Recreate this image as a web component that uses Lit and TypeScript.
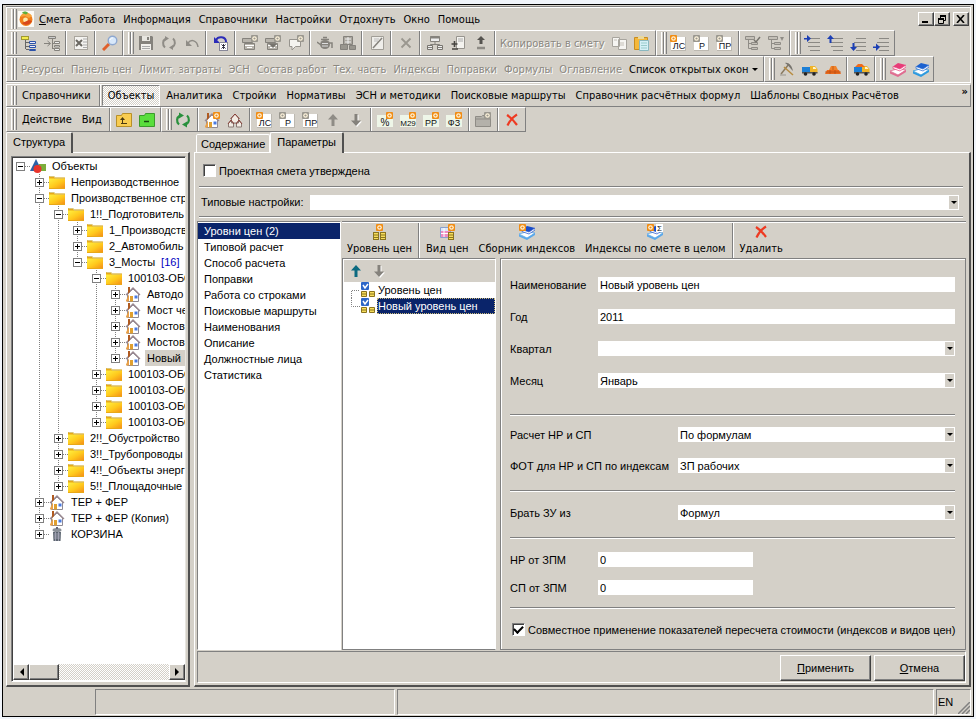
import { LitElement, html, svg, css, nothing } from "lit";
import { customElement, property, state } from "lit/decorators.js";
import { classMap } from "lit/directives/class-map.js";

/* ---------- icon parts ---------- */
const OR = "#f08c14";
const GR = "#85827c";
const LG = "#9a978f";
const gear = (x: number, y: number, c: string) => svg`
  <rect x=${x} y=${y} width="7" height="7" rx="1" fill=${c}/>
  <circle cx=${x + 3.5} cy=${y + 3.5} r="2.3" fill="#fff4dc"/>
  <circle cx=${x + 3.5} cy=${y + 3.5} r="1.1" fill=${c}/>`;

const sheet = (label: string, c: string) => svg`
  <rect x="1" y="2" width="15" height="14" fill="#fff"/>
  <path d="M1 15.500h15M15.500 2v14" stroke="#bcb8b0"/>
  <text x="9" y="14" text-anchor="middle" font-size="9" font-family="Liberation Sans, sans-serif" fill="#112">${label}</text>
  ${gear(0, 0, c)}`;
const calcSheet = (label: string, size = 9) => svg`
  <rect x="0" y="3" width="16" height="12" fill="#eef6e8"/>
  <text x="8" y="14" text-anchor="middle" font-size=${size} font-family="Liberation Sans, sans-serif" fill="#111">${label}</text>
  ${gear(9, 0, OR)}`;
const hier = (a: string, b: string) => svg`
  <rect x="0.5" y="1.500" width="7" height="3" fill=${a} stroke="#a09a30"/>
  <path d="M4.500 5v9M5 7.500h3M5 11.500h3M5 14.500h3" stroke="#666" fill="none"/>
  <path d="M8.500 6.500h6v2h-6zM8.500 10.500h6v2h-6zM8.500 14.500h6v1h-6z" fill="#eef" stroke=${b}/>`;
const books = (a: string, b: string) => svg`
  <path d="M0 10l7-2 9 1-8 5z" fill="#fff" stroke=${b} stroke-width=".8"/>
  <path d="M0 10.500l8 3.500 8-5v2l-8 5-8-3.500z" fill=${b}/>
  <path d="M3 5.500l5-3.500 8 2-6 4z" fill=${a}/>
  <path d="M3 5.500l7 2.500 6-4v2l-6 4-7-2.500z" fill="#fff" stroke=${a} stroke-width=".7"/>`;
const lines = (arrow: unknown) => svg`
  <path d="M6 3.500h10M4 7.500h12M4 11.500h12M6 15.500h10" stroke="#8b8984" fill="none"/>${arrow}`;
const arr = (d: string) => svg`<path d=${d} fill="#1c3fb4"/>`;
const truck = svg`<path d="M0 6h8v5H0z" fill="#1c7fd6"/><path d="M8 5h5l2.500 3v4H8z" fill="#f0b428"/><path d="M11 6h2l1.500 2H11z" fill="#fff3cc"/><path d="M0 11h15.500v1.500H0z" fill="#555"/><circle cx="3.500" cy="13" r="1.800" fill="#222"/><circle cx="12" cy="13" r="1.800" fill="#222"/>`;
const coins = (x: number, y: number) => svg`<rect x=${x + 0.5} y=${y + 0.5} width="5" height="7" fill="#f6dd5a" stroke="#8a7420"/><path d=${`M${x} ${y + 3}h6M${x} ${y + 5.5}h6`} stroke="#8a7420"/>`;
const box = (g: string) => svg`<path d="M.500 3.500h10v4H.500zM2.500 8.500h10v6h-10z" fill="#b8b4ac" stroke=${GR}/><path d="M3 10.500h9M5 12.500h5" stroke="#fff"/>${gear(9, 0, g)}`;
const houseBody = svg`<path d="M2.500 8v7.500h11V8L8 3z" fill="#fff" stroke="#8f8a94"/><path d="M1 9l7-7 7 7" stroke="#9a8890" stroke-width="1.300" fill="none"/><path d="M3 1h2v5L3 8z" fill="#b05a20"/><path d="M1 14.500L4 8v7.500H1z" fill="#e8a048"/><path d="M5 10h3v5.500H5z" fill="#e0a030"/><path d="M9.500 9.500h3v3h-3z" fill="#4a7ae0"/>`;
const hierG = svg`<path d="M.500 1.500h9v3h-9zM6.500 7.500h6v2h-6zM6.500 12.500h6v2h-6z" fill="#c4c0b8" stroke="#8f8c86"/><path d="M3.500 5v8.500h3M4 8.500h3" stroke="#8f8c86" fill="none"/>`;

const ICONS: Record<string, unknown> = {
  app: svg`<rect width="16" height="16" fill="#fbfaf6"/><circle cx="8" cy="8.500" r="6.500" fill="#ef7d1a"/><path d="M2 6c2-5 9-6 12-1l-3 2-4-2z" fill="#f7a53a"/><path d="M4 2c1-2 5-2 6 0L8 3.500z" fill="#5bae3c"/><circle cx="7.500" cy="9" r="2.400" fill="#ffe9a8"/><path d="M4 12c3 3 8 2 10-2l-3-1z" fill="#d8481c"/>`,
  tree: hier("#f4ec50", "#2c52a8"),
  treeIn: svg`<path d="M4.500 1.500h7v2h-7z" fill="#ccc" stroke=${GR}/><path d="M8.500 4v10M0 8.500h6M9 8.500h2M9 13.500h2M3.500 6l3 2.500-3 2.500" stroke=${GR} fill="none"/><path d="M10.500 6.500h5v2h-5zM10.500 10.500h5v1.500h-5zM10.500 13.500h5v2h-5z" fill="#eee" stroke=${GR}/>`,
  excel: svg`<rect x="1.500" y="1.500" width="13" height="13" fill="#f4f3f0" stroke="#aaa69e"/><path d="M10 4h4M10 7h4M10 10h4M10 12.500h4" stroke="#aaa"/><path d="M3 5l6 6M9 5l-6 6" stroke="#6b6862" stroke-width="2"/>`,
  search: svg`<path d="M1 15L7 9" stroke="#e0602c" stroke-width="3"/><circle cx="10.500" cy="5.500" r="4.300" fill="#d8e8fa" stroke="#8ea8d0" stroke-width="1.400"/><path d="M8 5c.5-2 2-2 3-2" stroke="#fff" fill="none"/>`,
  save: svg`<path d="M1 1h13l1 1v13H1z" fill=${GR}/><rect x="4" y="1" width="8" height="5" fill="#e8e6e0"/><rect x="9" y="2" width="2" height="3" fill=${GR}/><rect x="3" y="9" width="10" height="6" fill="#f2f0ec"/><path d="M4 11.500h8M4 13.500h8" stroke="#aaa"/>`,
  refreshG: svg`<path d="M4 12.500A5.500 5.500 0 0 1 5 3.500M12 3.500a5.500 5.500 0 0 1-1 9" stroke="#8f8c86" stroke-width="2" fill="none"/><path d="M4 1l4 2.500L4 6zM12 10l-4 2.500L12 15z" fill="#8f8c86"/>`,
  refresh: svg`<path d="M4 12.500A5.500 5.500 0 0 1 5 3.500M12 3.500a5.500 5.500 0 0 1-1 9" stroke="#28903c" stroke-width="2.200" fill="none"/><path d="M4 .5L9 3.500 4 6.500zM12 9.500l-5 3 5 3z" fill="#28903c"/>`,
  undo: svg`<path d="M4 8c3-4 9-3 10 4" stroke="#8f8c86" stroke-width="1.500" fill="none"/><path d="M2 5v6h6z" fill="#8f8c86"/>`,
  undoDoc: svg`<path d="M3 5c2-4 10-4 10 2" stroke="#2c2cb8" stroke-width="2" fill="none"/><path d="M1 2v6h6z" fill="#2c2cb8"/><rect x="6.500" y="7.500" width="8" height="8" fill="#fff" stroke="#889"/><path d="M8.500 9.500l4 4M12.500 9.500l-4 4M10.500 9v5" stroke="#334"/>`,
  boxA: box(LG),
  boxB: svg`${box(LG)}<path d="M4 9h8l-4 4z" fill="#77746e"/>`,
  bubble: svg`<path d="M1.500 4.500h11v7h-5L4 15v-3.500H1.500z" fill="#f4f3ef" stroke="#97948e"/>${gear(9, 0, LG)}`,
  pot: svg`<ellipse cx="8" cy="9.500" rx="5" ry="4.500" fill=${GR}/><path d="M0 7l4 3M12 8h3v5M4 4.500h8M6 2.500h4" stroke=${GR} stroke-width="1.500" fill="none"/><path d="M5 8.500h6M5 11h6" stroke="#ddd"/>`,
  calc: svg`<path d="M3.500 1.500h9v8h-9z" fill="#aaa69e" stroke=${GR}/><path d="M5 4h6M5 7h6M8 2v7" stroke="#eee"/><path d="M.500 9.500h7v5h-7zM9.500 10.500h6v4h-6z" fill="#99968e" stroke=${GR}/>`,
  edit: svg`<path d="M2.500 1.500h12v13h-12z" fill="#efeeea" stroke="#a19e97"/><path d="M5 4h5M5 6h4" stroke="#bbb"/><path d="M4 13L13 3" stroke="#85827c" stroke-width="1.500"/>`,
  crossG: svg`<path d="M3.500 3.500l9 9M12.500 3.500l-9 9" stroke="#9a978f" stroke-width="1.800"/>`,
  cross: svg`<path d="M3 3c3 2 7 6 10 10M13 2.500C9 5 5 10 3.500 13.500" stroke="#ee3a22" stroke-width="2.200" fill="none"/>`,
  tables: svg`<path d="M3.500 1.500h9v5h-9z" fill="#eee" stroke=${GR}/><path d="M3 2.500h10" stroke=${GR} stroke-width="2"/><path d="M8 7v2M3.500 12V9.500h9V12" stroke=${GR} fill="none"/><path d="M.500 10.500h5v4h-5zM10.500 10.500h5v4h-5z" fill="#eee" stroke="#77746e"/><path d="M1 12.500h4M11 12.500h4" stroke=${GR}/>`,
  docPlus: svg`<path d="M6.500 1.500h8v12h-8z" fill="#f4f3ef" stroke="#97948e"/><path d="M8 4h5M8 6h5" stroke="#aaa"/><path d="M4.500 6v6M1.500 9h6M2 14h6" stroke="#45433f" stroke-width="1.600"/>`,
  upBar: svg`<path d="M8 1l4 4H9.500v4h-3V5H4z" fill="#55534f"/><path d="M4 13h8" stroke="#8f8c86" stroke-width="2.500"/>`,
  copy: svg`<path d="M1.500 2.500h7v9h-7zM7.500 4.500h8v10h-8z" fill="#f6f5f2" stroke="#a8a59e"/><path d="M9 8h4M9 10h4M3 5h3" stroke="#c4c0b8"/>`,
  paste: svg`<path d="M.500 2.500h13v12H.500z" fill="#f4b83c" stroke="#c88c20"/><path d="M4 1h6v3H4z" fill="#e8d8a0"/><path d="M5.500 5.500h9v10h-9z" fill="#d4f0f6" stroke="#8ab8c0"/><path d="M7 8h6M7 10.500h6M7 13h6" stroke="#9cc"/>`,
  ls: sheet("ЛС", OR), p: sheet("Р", LG), pr: sheet("ПР", LG),
  hierTick: svg`${hierG}<path d="M9 5l2 2 4-5" stroke="#77746e" stroke-width="1.500" fill="none"/>`,
  hierDown: svg`${hierG}<path d="M12 2h4l-2 4z" fill="#8f8c86"/>`,
  in1: lines(arr("M0 3h3V0l4 3.500L3 7V4.500H0z")),
  in2: lines(arr("M2.500 8V4H0l3.500-4L7 4H4.500v4z")),
  in3: lines(arr("M2.500 8v4H0l3.500 4L7 12H4.500V8z")),
  in4: lines(arr("M0 11.500h3v-3l4 3.500-4 4v-3H0z")),
  hammer: svg`<path d="M2 13L10 3" stroke="#8a7a60" stroke-width="1.500"/><path d="M6 2c4-1 7 3 8 8-3-3-4-5-8-8z" fill="#77746e"/><path d="M5 6l9 8" stroke="#b88c40" stroke-width="1.500"/><path d="M1 14h6" stroke="#99968e"/>`,
  truck,
  bricks: svg`<path d="M0 13l2-4h12l2 4z" fill="#ea6a1c"/><path d="M4 9l2-4h5l2 4z" fill="#f0842c"/><path d="M0 11h16M5 9v4M10 9v4M8 5v4" stroke="#b84c10" stroke-width=".7"/>`,
  truckBricks: svg`${truck}<path d="M1 6l3-3h4l3 3z" fill="#ee6a1c"/>`,
  booksR: books("#e83c78", "#e06c90"), booksB: books("#1c62d0", "#2c9ae0"),
  folderUp: svg`<path d="M.500 3.500h5l1-2h9v13H.500z" fill="#f8cc50" stroke="#b89028"/><path d="M5 11.500h6M6.500 11V6" stroke="#4a3a10" fill="none"/><path d="M4 8l2.500-3L9 8z" fill="#4a3a10"/>`,
  folderMin: svg`<path d="M.500 3.500h5l1-2h9v13H.500z" fill="#5ade3c" stroke="#3c9a2c"/><path d="M5 9.500h5" stroke="#184a10" stroke-width="1.500"/>`,
  house: houseBody,
  houseNew: svg`${houseBody}${gear(9, 0, OR)}`,
  houses: svg`<path d="M4.500 6v5h7V6L8 2zM1.500 11v4h5v-4L4 9zM9.500 11v4h5v-4L12 9z" fill="#f4ece4" stroke="#8a7a74"/><path d="M3.500 7L8 2l4.500 5M1 12l3-4 3 4M9 12l3-4 3 4" stroke="#8a4038" fill="none"/>`,
  up: svg`<path d="M8 2l5 5.500H9.500V14h-3V7.500H3z" fill="#8f8c86"/>`,
  down: svg`<path d="M9 15l5-5.500h-3.500V3h-3v6.500H4z" fill="#fff"/><path d="M8 14l5-5.500H9.500V2h-3v6.500H3z" fill="#85827c"/>`,
  upTeal: svg`<path d="M8 2l5 5.500H9.500V14h-3V7.500H3z" fill="#0c6a80"/>`,
  pct: calcSheet("%", 10), m29: calcSheet("М29", 8), rr: calcSheet("РР"), f3: calcSheet("ФЗ"),
  folderG: svg`<path d="M.500 4.500h6l1-1h8v11H.500z" fill="#b4b1aa" stroke="#8f8c86"/><path d="M1 7h14" stroke="#8f8c86"/>${gear(9, 0, LG)}`,
  folder: svg`<path d="M0 2h5l1 1.500h10V15H0z" fill="#e8a818"/><path d="M0 4.500h16V14H0z" fill="url(#fg)"/><path d="M.500 2.500h4.500l1 1.500H15.500" stroke="#d8c880" fill="none"/><defs><linearGradient id="fg" x1="0" y1="0" x2="1" y2="1"><stop offset="0" stop-color="#fff040"/><stop offset=".55" stop-color="#ffc81c"/><stop offset="1" stop-color="#f49018"/></linearGradient></defs>`,
  root: svg`<path d="M6 1l6 12H0z" fill="#2c62a8"/><rect x="9" y="6" width="7" height="7" fill="#7cae3c"/><circle cx="7.500" cy="11" r="4" fill="#e8342c"/>`,
  bin: svg`<ellipse cx="8" cy="4" rx="4.500" ry="2" fill="#8a9098"/><path d="M7 1h2v2H7z" fill="#667"/><path d="M4 6h8l-.5 9h-7z" fill="#5c6570"/><path d="M5 8h6M5 10h6M5 12h6M6.500 6v9M9.500 6v9" stroke="#aab" stroke-width=".8"/>`,
  level: svg`${coins(1, 8)}${coins(8, 8)}${gear(4, 0, OR)}`,
  kind: svg`<path d="M1.500 3.500h10v10h-10z" fill="#dce8fa" stroke="#8aa0cc"/><path d="M2 7h9v6H2z" fill="#ee8cc0"/><path d="M2 9.500h9M5 4v9" stroke="#fff"/>${coins(9, 8)}${gear(9, 0, OR)}`,
  coll: svg`${books("#1c4ec8", "#5aa8ea")}${gear(0, 0, OR)}`,
  sum: svg`${books("#1c4ec8", "#5aa8ea")}${gear(0, 0, OR)}<rect x="9" y="0" width="7" height="8" fill="#fff"/><text x="12.500" y="7" text-anchor="middle" font-size="8" font-family="Liberation Sans, sans-serif" fill="#111">Σ</text>`,
  levelItem: svg`<rect x="1" y="0" width="8" height="8" rx="1" fill="#2c66c8"/><path d="M3 3l2 3 3-4" stroke="#fff" stroke-width="1.500" fill="none"/><path d="M1.500 9.500h5v5h-5zM9.500 9.500h5v5h-5z" fill="#f6dd5a" stroke="#8a7420"/><path d="M1 12h6M9 12h6" stroke="#8a7420"/>`,
};

@customElement("ui-icon")
export class UiIcon extends LitElement {
  @property() name = "";
  static styles = css`
    :host { display: block; width: 16px; height: 16px; flex: none; }
    svg { display: block; }
  `;
  render() {
    return html`<svg width="16" height="16" viewBox="0 0 16 16" aria-hidden="true">${ICONS[this.name] ?? nothing}</svg>`;
  }
}

/* ---------- toolbars ---------- */
@customElement("tool-bar")
export class ToolBar extends LitElement {
  /** Icon names; "|" is a separator, "=Text" a disabled caption. */
  @property({ attribute: false }) items: string[] = [];
  static styles = css`
    :host {
      display: flex; align-items: center; box-sizing: border-box; flex: none;
      padding: 0 1px 0 4px;
      border: 1px solid; border-color: #fff #808080 #808080 #fff;
      font: 11px "DejaVu Sans Condensed", "DejaVu Sans", sans-serif;
    }
    .grip { width: 1px; align-self: stretch; margin: 1px 0; border-left: 1px solid #fff; border-right: 1px solid #808080; }
    .sep { width: 4px; align-self: stretch; display: flex; margin: 0 1px; justify-content: center; }
    .sep::before { content: ""; border-left: 1px solid #808080; border-right: 1px solid #fff; }
    button { all: unset; display: flex; justify-content: center; align-items: center; width: 23px; height: 22px; }
    button.text { width: auto; padding: 0 3px 0 2px; color: #8a8780; text-shadow: 1px 1px #fff; white-space: nowrap; }
  `;
  render() {
    return html`<span class="grip"></span><span class="grip"></span>
      <slot></slot>
      ${this.items.map((i) =>
        i === "|" ? html`<span class="sep"></span>`
        : i[0] === "=" ? html`<button class="text" disabled>${i.slice(1)}</button>`
        : html`<button aria-label=${i}><ui-icon name=${i}></ui-icon></button>`)}`;
  }
}

/* ---------- tree ---------- */
interface Node { d: number; e: "+" | "-"; i: string; t: string; n?: string; sel?: boolean }
const TREE: Node[] = [
  { d: 0, e: "-", i: "root", t: "Объекты" },
  { d: 1, e: "+", i: "folder", t: "Непроизводственное" },
  { d: 1, e: "-", i: "folder", t: "Производственное стр" },
  { d: 2, e: "-", i: "folder", t: "1!!_Подготовитель" },
  { d: 3, e: "+", i: "folder", t: "1_Производств" },
  { d: 3, e: "+", i: "folder", t: "2_Автомобиль" },
  { d: 3, e: "-", i: "folder", t: "3_Мосты", n: "[16]" },
  { d: 4, e: "-", i: "folder", t: "100103-ОБО" },
  { d: 5, e: "+", i: "house", t: "Автодо" },
  { d: 5, e: "+", i: "house", t: "Мост че" },
  { d: 5, e: "+", i: "house", t: "Мостов" },
  { d: 5, e: "+", i: "house", t: "Мостов" },
  { d: 5, e: "+", i: "house", t: "Новый", sel: true },
  { d: 4, e: "+", i: "folder", t: "100103-ОБО" },
  { d: 4, e: "+", i: "folder", t: "100103-ОБО" },
  { d: 4, e: "+", i: "folder", t: "100103-ОБО" },
  { d: 4, e: "+", i: "folder", t: "100103-ОБО" },
  { d: 2, e: "+", i: "folder", t: "2!!_Обустройство" },
  { d: 2, e: "+", i: "folder", t: "3!!_Трубопроводы" },
  { d: 2, e: "+", i: "folder", t: "4!!_Объекты энерг" },
  { d: 2, e: "+", i: "folder", t: "5!!_Площадочные" },
  { d: 1, e: "+", i: "house", t: "ТЕР + ФЕР" },
  { d: 1, e: "+", i: "house", t: "ТЕР + ФЕР (Копия)" },
  { d: 1, e: "+", i: "bin", t: "КОРЗИНА" },
];

@customElement("object-tree")
export class ObjectTree extends LitElement {
  static styles = css`
    :host { display: block; overflow: hidden; background: #fff; }
    .list { list-style: none; margin: 0; padding: 0; }
    .row { display: flex; height: 16px; white-space: nowrap; line-height: 16px; }
    svg { display: block; flex: none; }
    .label { padding-left: 2px; margin-left: 4px; flex: 1; }
    .label.sel { background: #d4d0c8; }
    .count { color: #0000c0; margin-left: 6px; }
  `;
  private more(row: number, depth: number) {
    for (let k = row + 1; k < TREE.length; k++) {
      if (TREE[k].d < depth) return false;
      if (TREE[k].d === depth) return true;
    }
    return false;
  }
  render() {
    const dot = (d: string) => svg`<path d=${d} stroke="#808080" stroke-dasharray="1 1" fill="none"/>`;
    return html`<ul class="list" role="tree">${TREE.map((n, r) => html`
      <li class="row" role="treeitem">
        ${Array.from({ length: n.d }, (_, c) => html`<svg width="19" height="16">${this.more(r, c) ? dot("M7.500 0V16") : nothing}</svg>`)}
        <svg width="17" height="16" shape-rendering="crispEdges">
          ${n.d > 0 ? dot("M7.500 0V8") : nothing}${this.more(r, n.d) ? dot("M7.500 8V16") : nothing}${dot("M12 8.500H17")}
          <rect x="3.500" y="4.500" width="8" height="8" fill="#fff" stroke="#808080"/>
          <path d=${n.e === "+" ? "M5 8.500h5M7.500 6v5" : "M5 8.500h5"} stroke="#000"/>
        </svg>
        <ui-icon name=${n.i}></ui-icon>
        <span class=${classMap({ label: true, sel: !!n.sel })}>${n.t}${n.n ? html`<span class="count">${n.n}</span>` : nothing}</span>
      </li>`)}</ul>`;
  }
}

/* ---------- drop-down ---------- */
@customElement("drop-down")
export class DropDown extends LitElement {
  @property() value = "";
  @property() label = "";
  static styles = css`
    :host { display: flex; position: relative; height: 15px; min-width: 0; }
    select { appearance: none; border: 0; border-radius: 0; margin: 0; padding: 0 14px 0 2px; background: #fff; color: #000; font: inherit; flex: 1; min-width: 0; height: 15px; }
    .arrow { position: absolute; right: 1px; top: 1px; bottom: 1px; width: 9px; display: flex; align-items: center; justify-content: center; background: #d4d0c8; pointer-events: none; }
    .arrow::before { content: ""; border: 3px solid transparent; border-top-color: #000; border-bottom: 0; }
  `;
  render() {
    return html`<select aria-label=${this.label}><option>${this.value}</option></select><span class="arrow"></span>`;
  }
}

/* ---------- application ---------- */
@customElement("app-root")
export class AppRoot extends LitElement {
  @state() private section = 0;

  static styles = css`
    :host { display: flex; box-sizing: border-box; min-height: 100vh; padding: 4px 2px 2px; background: #f0f4fa; color: #000; font: 11px "Liberation Sans", Arial, sans-serif; cursor: default; }
    * { box-sizing: border-box; }
    .menu, .nav, .captions { font-family: "DejaVu Sans Condensed", "DejaVu Sans", sans-serif; }
    button, a { font: inherit; color: inherit; text-decoration: none; cursor: default; }
    .window { flex: 1; min-width: 0; display: flex; flex-direction: column; border: 1px solid #000; background: #d4d0c8; padding: 1px 2px 1px 3px; }

    .dock { border: 1px solid #fff; border-left: 0; border-top-color: #808080; }
    .bars { display: flex; height: 26px; }
    .menu { display: flex; align-items: center; height: 23px; border-top: 1px solid #fff; border-left: 1px solid #fff; padding-left: 4px; }
    .grip { width: 3px; align-self: stretch; margin: 1px 0; border-left: 1px solid #fff; border-right: 1px solid #808080; }
    .menu ui-icon { margin: 0 1px; }
    .menu a { padding: 0 4px; white-space: nowrap; }
    .caption { display: flex; margin-left: auto; }
    .cap { display: grid; place-items: center; width: 16px; height: 14px; padding: 0; background: #d4d0c8; border: 1px solid; border-color: #fff #404040 #404040 #fff; box-shadow: inset -1px -1px #808080; }
    .cap.close { margin: 0 1px 0 3px; }
    .link { padding: 0 4px 0 3px; white-space: nowrap; border: 0; background: none; }
    .link:disabled { color: #8a8780; text-shadow: 1px 1px #fff; }
    .drop::after { content: ""; display: inline-block; border: 3px solid transparent; border-top-color: #000; border-bottom: 0; margin: 0 0 2px 4px; }
    .link:first-child { padding-left: 4px; }

    .nav { display: flex; align-items: center; height: 23px; margin-top: 1px; border: 1px solid; border-color: #fff #808080 #808080 #fff; padding-left: 4px; white-space: nowrap; overflow: hidden; }
    .nav a { padding: 0 5px; }
    .nav .bar { align-self: stretch; border-left: 1px solid #808080; border-right: 1px solid #fff; margin-left: 3px; }
    .nav .on { align-self: stretch; display: flex; align-items: center; margin: 0 1px; border: 1px solid; border-color: #808080 #fff #fff #808080; background: repeating-conic-gradient(#fff 0 25%, #d4d0c8 0 50%) 0 0 / 2px 2px; }
    .more { margin-left: auto; align-self: flex-start; font-weight: bold; padding: 0 2px 0 0; border: 0; background: none; }
    .row5 { display: flex; height: 25px; }
    .row5 .link { padding: 0 5px; }

    .main { flex: 1; display: flex; gap: 4px; min-height: 0; }
    .side { width: 184px; flex: none; display: flex; flex-direction: column; }
    .work { flex: 1; min-width: 0; display: flex; flex-direction: column; }
    .tabs { display: flex; align-items: flex-end; height: 21px; position: relative; z-index: 1; margin-bottom: -1px; }
    .tab { background: #d4d0c8; border: 1px solid #fff; border-bottom: 0; border-radius: 2px 2px 0 0; padding: 0 4px; height: 18px; margin: 0 0 1px; white-space: nowrap; }
    .tab.on { height: 21px; margin: 0; padding: 0 6px 2px; border-right: 2px solid #505050; }
    .work .tabs { padding-left: 2px; }
    .page { flex: 1; min-height: 0; display: flex; flex-direction: column; border: 1px solid #fff; border-right: 2px solid #505050; border-bottom: 2px solid #505050; }
    .side .page { padding: 3px 2px 3px 4px; }
    .well { flex: 1; display: flex; flex-direction: column; border: 1px solid; border-color: #808080 #e8e6e0 #fff #808080; box-shadow: inset 1px 1px #404040; padding: 1px 0 1px 1px; background: #fff; min-height: 0; }
    object-tree { flex: 1; }
    .hbar { display: flex; height: 16px; background: repeating-conic-gradient(#fff 0 25%, #d4d0c8 0 50%) 0 0 / 2px 2px; }
    .hbar button { width: 16px; padding: 0; display: grid; place-items: center; background: #d4d0c8; border: 1px solid; border-color: #fff #404040 #404040 #fff; box-shadow: inset -1px -1px #808080; }
    .hbar .thumb { width: 30px; }
    .hbar .end { margin-left: auto; }

    .work .page { padding: 0 3px 2px 2px; }
    .check { display: flex; align-items: center; gap: 3px; white-space: nowrap; }
    .check input { appearance: none; width: 13px; height: 13px; margin: 0; flex: none; background: #fff; border: 1px solid; border-color: #808080 #fff #fff #808080; box-shadow: inset 1px 1px #404040; display: grid; place-items: center; }
    .check input:checked::before { content: ""; width: 7px; height: 4px; border: solid #000; border-width: 0 0 2px 2px; transform: rotate(-45deg) translate(1px, -1px); }
    .approve { height: 33px; padding: 2px 0 0 6px; }
    .rule { border: 0; margin: 0 3px 0 2px; height: 2px; border-top: 1px solid #808080; border-bottom: 1px solid #fff; }
    .preset { display: flex; align-items: center; gap: 6px; height: 28px; padding: 0 7px 0 4px; }
    .preset drop-down { flex: 1; }

    .split { flex: 1; display: flex; gap: 1px; margin-top: 3px; min-height: 0; }
    .cats { width: 144px; margin: 0; padding: 1px 0; list-style: none; background: #fff; border: 1px solid; border-color: #808080 #fff #fff #808080; flex: none; }
    .cats li { height: 16px; line-height: 16px; padding-left: 6px; }
    .cats .on { background: #0a246a; color: #fff; }
    .right { flex: 1; min-width: 0; display: flex; flex-direction: column; border-top: 1px solid #808080; }
    .captions { display: flex; height: 36px; border-top: 1px solid #fff; }
    .big { display: flex; flex-direction: column; align-items: center; gap: 2px; border: 0; background: none; padding: 1px 5px 0; white-space: nowrap; }
    .vsep { border-left: 1px solid #808080; border-right: 1px solid #fff; margin: 0 1px; }
    .body { flex: 1; display: flex; gap: 4px; min-height: 0; }
    .levels { width: 154px; flex: none; border: 1px solid; border-color: #808080 #fff #808080 #808080; background: #fff; padding: 1px 0 0 1px; }
    .moves { display: flex; height: 22px; background: #d4d0c8; }
    .moves button { border: 0; background: none; width: 23px; padding: 0; display: grid; place-items: center; }
    .lv { display: flex; height: 16px; line-height: 16px; padding-left: 7px; }
    .lv svg { flex: none; }
    .lv span { flex: 1; padding-left: 1px; margin-left: 1px; white-space: nowrap; }
    .lv .on { background: #0a246a; color: #fff; outline: 1px dotted #c8b878; outline-offset: -1px; }

    .form { flex: 1; min-width: 0; border: 1px solid #808080; box-shadow: inset 1px 1px #fff; padding: 18px 10px 13px 9px; }
    .field { display: grid; grid-template-columns: 88px minmax(0, 1fr); align-items: center; height: 15px; margin-bottom: 17px; white-space: nowrap; }
    .field.wide { grid-template-columns: 168px minmax(0, 1fr); margin-bottom: 16px; }
    .field.tight { margin-bottom: 13px; }
    .field.flush { margin-bottom: 0; }
    .field input { border: 0; padding: 0 0 0 2px; margin: 0; height: 15px; background: #fff; font: inherit; color: #000; width: 100%; }
    .field .short { width: 155px; }
    .form .rule { margin: 17px 0 13px; }
    .form .r1 { margin: 26px 0 11px; }
    .form .r4 { margin: 12px 0 14px; }
    .form .check { padding-left: 2px; }

    .foot { display: flex; justify-content: flex-end; gap: 3px; height: 32px; padding: 3px 0; margin-top: 1px; border: 1px solid; border-color: #808080 #fff #fff #808080; }
    .push { width: 91px; height: 26px; background: #d4d0c8; border: 1px solid; border-color: #fff #404040 #404040 #fff; box-shadow: inset -1px -1px #808080; padding: 0; }

    .status { display: flex; gap: 2px; height: 26px; margin-top: 2px; }
    .cell { border: 1px solid; border-color: #808080 #fff #fff #808080; }
    .s0 { width: 87px; } .s1 { width: 300px; } .s2 { flex: 1; }
    .s3 { width: 35px; display: flex; align-items: center; justify-content: space-between; padding-left: 1px; }
    .s3 svg { align-self: flex-end; }
  `;

  private cats = ["Уровни цен (2)", "Типовой расчет", "Способ расчета", "Поправки", "Работа со строками", "Поисковые маршруты", "Наименования", "Описание", "Должностные лица", "Статистика"];

  private big(icon: string, text: string) {
    return html`<button class="big"><ui-icon name=${icon}></ui-icon>${text}</button>`;
  }
  private text(id: string, label: string, value: string, cls = "", short = false) {
    return html`<div class="field ${cls}"><label for=${id}>${label}</label><input id=${id} class=${short ? "short" : ""} .value=${value}></div>`;
  }
  private drop(label: string, value: string, cls = "") {
    return html`<div class="field ${cls}"><span>${label}</span><drop-down label=${label} value=${value}></drop-down></div>`;
  }

  render() {
    const off = ["Ресурсы", "Панель цен", "Лимит. затраты", "ЭСН", "Состав работ", "Тех. часть", "Индексы", "Поправки", "Формулы", "Оглавление"];
    return html`<div class="window">
      <header class="dock">
        <nav class="menu">
          <span class="grip"></span><span class="grip"></span><ui-icon name="app"></ui-icon>
          <a href="#"><u>С</u>мета</a>${["Работа", "Информация", "Справочники", "Настройки", "Отдохнуть", "Окно", "Помощь"].map((t) => html`<a href="#">${t}</a>`)}
          <span class="caption">
            <button class="cap" aria-label="Свернуть"><svg width="10" height="8"><path d="M1 7h6" stroke="#000" stroke-width="2"/></svg></button>
            <button class="cap" aria-label="Восстановить"><svg width="10" height="9"><path d="M3 1h6M1 4h6" stroke="#000" stroke-width="2"/><path d="M3.500 1v3M8.500 1v4.500H7M1.500 4v4.500h5V4" stroke="#000" fill="none"/></svg></button>
            <button class="cap close" aria-label="Закрыть"><svg width="10" height="8"><path d="M1 0l7 8M8 0L1 8" stroke="#000" stroke-width="1.600"/></svg></button>
          </span>
        </nav>
        <div class="bars">
          <tool-bar .items=${["tree", "treeIn", "|", "excel", "|", "search"]}></tool-bar>
          <tool-bar .items=${["save", "refreshG", "undo", "|", "undoDoc", "|", "boxA", "boxB", "bubble", "|", "pot", "calc", "|", "edit", "|", "crossG", "|", "tables", "docPlus", "upBar", "|", "=Копировать в смету", "copy", "paste"]}></tool-bar>
          <tool-bar .items=${["ls", "p", "pr", "|", "hierTick", "hierDown"]}></tool-bar>
          <tool-bar .items=${["in1", "in2", "in3", "in4"]}></tool-bar>
        </div>
        <div class="bars">
          <tool-bar>${off.map((t) => html`<button class="link" disabled>${t}</button>`)}<button class="link drop">Список открытых окон</button></tool-bar>
          <tool-bar .items=${["hammer", "truck", "bricks", "|", "truckBricks"]}></tool-bar>
          <tool-bar .items=${["booksR", "booksB"]}></tool-bar>
        </div>
      </header>
      <nav class="nav">
        <span class="grip"></span><span class="grip"></span>
        <a href="#">Справочники</a><span class="bar"></span><a href="#" class="on">Объекты</a>
        ${["Аналитика", "Стройки", "Нормативы", "ЭСН и методики", "Поисковые маршруты", "Справочник расчётных формул", "Шаблоны Сводных Расчётов"].map((t) => html`<a href="#">${t}</a>`)}
        <button class="more">»</button>
      </nav>
      <div class="row5">
        <tool-bar .items=${["|", "folderUp", "folderMin"]}><button class="link">Действие</button><button class="link">Вид</button></tool-bar>
        <tool-bar .items=${["refresh", "|", "houseNew", "houses", "|", "ls", "p", "pr", "up", "down", "|", "pct", "m29", "rr", "f3", "|", "folderG", "|", "cross"]}></tool-bar>
      </div>

      <div class="main">
        <aside class="side">
          <div class="tabs"><button class="tab on">Структура</button></div>
          <div class="page"><div class="well">
            <object-tree></object-tree>
            <div class="hbar">
              <button aria-label="Влево"><svg width="5" height="8"><path d="M5 0v8L1 4z"/></svg></button><button class="thumb" aria-label="Прокрутка"></button>
              <button class="end" aria-label="Вправо"><svg width="5" height="8"><path d="M0 0v8l4-4z"/></svg></button>
            </div>
          </div></div>
        </aside>

        <section class="work">
          <div class="tabs"><button class="tab">Содержание</button><button class="tab on">Параметры</button></div>
          <div class="page">
            <label class="check approve"><input type="checkbox">Проектная смета утверждена</label>
            <hr class="rule">
            <div class="preset"><span>Типовые настройки:</span><drop-down label="Типовые настройки"></drop-down></div>
            <hr class="rule">
            <div class="split">
              <ul class="cats">${this.cats.map((c, k) => html`<li class=${classMap({ on: k === this.section })} @click=${() => (this.section = k)}>${c}</li>`)}</ul>
              <div class="right">
                <div class="captions">
                  ${this.big("level", "Уровень цен")}<span class="vsep"></span>
                  ${this.big("kind", "Вид цен")}${this.big("coll", "Сборник индексов")}${this.big("sum", "Индексы по смете в целом")}
                  <span class="vsep"></span>${this.big("cross", "Удалить")}
                </div>
                <div class="body">
                  <div class="levels">
                    <div class="moves"><button aria-label="Вверх"><ui-icon name="upTeal"></ui-icon></button><button aria-label="Вниз"><ui-icon name="down"></ui-icon></button></div>
                    <div class="lv"><svg width="9" height="16"><path d="M.500 16V8.500H9" stroke="#808080" stroke-dasharray="1 1" fill="none"/></svg><ui-icon name="levelItem"></ui-icon><span>Уровень цен</span></div>
                    <div class="lv"><svg width="9" height="16"><path d="M.500 0V8.500H9" stroke="#808080" stroke-dasharray="1 1" fill="none"/></svg><ui-icon name="levelItem"></ui-icon><span class="on">Новый уровень цен</span></div>
                  </div>
                  <form class="form" @submit=${(e: Event) => e.preventDefault()}>
                    ${this.text("name", "Наименование", "Новый уровень цен")}
                    ${this.text("year", "Год", "2011")}
                    ${this.drop("Квартал", "")}
                    ${this.drop("Месяц", "Январь", "flush")}
                    <hr class="rule r1">
                    ${this.drop("Расчет НР и СП", "По формулам", "wide")}
                    ${this.drop("ФОТ для НР и СП по индексам", "ЗП рабочих", "wide flush")}
                    <hr class="rule">
                    ${this.drop("Брать ЗУ из", "Формул", "wide flush")}
                    <hr class="rule">
                    ${this.text("nr", "НР от ЗПМ", "0", "tight", true)}
                    ${this.text("sp", "СП от ЗПМ", "0", "flush", true)}
                    <hr class="rule r4">
                    <label class="check"><input type="checkbox" checked>Совместное применение показателей пересчета стоимости (индексов и видов цен)</label>
                  </form>
                </div>
              </div>
            </div>
            <div class="foot"><button class="push"><u>П</u>рименить</button><button class="push"><u>О</u>тмена</button></div>
          </div>
        </section>
      </div>

      <footer class="status">
        <span class="s0"></span><span class="cell s1"></span><span class="cell s2"></span>
        <span class="cell s3">EN<svg width="12" height="12"><path d="M12 0L0 12M12 4L4 12M12 8L8 12" stroke="#808080" stroke-width="1.500"/></svg></span>
      </footer>
    </div>`;
  }
}
